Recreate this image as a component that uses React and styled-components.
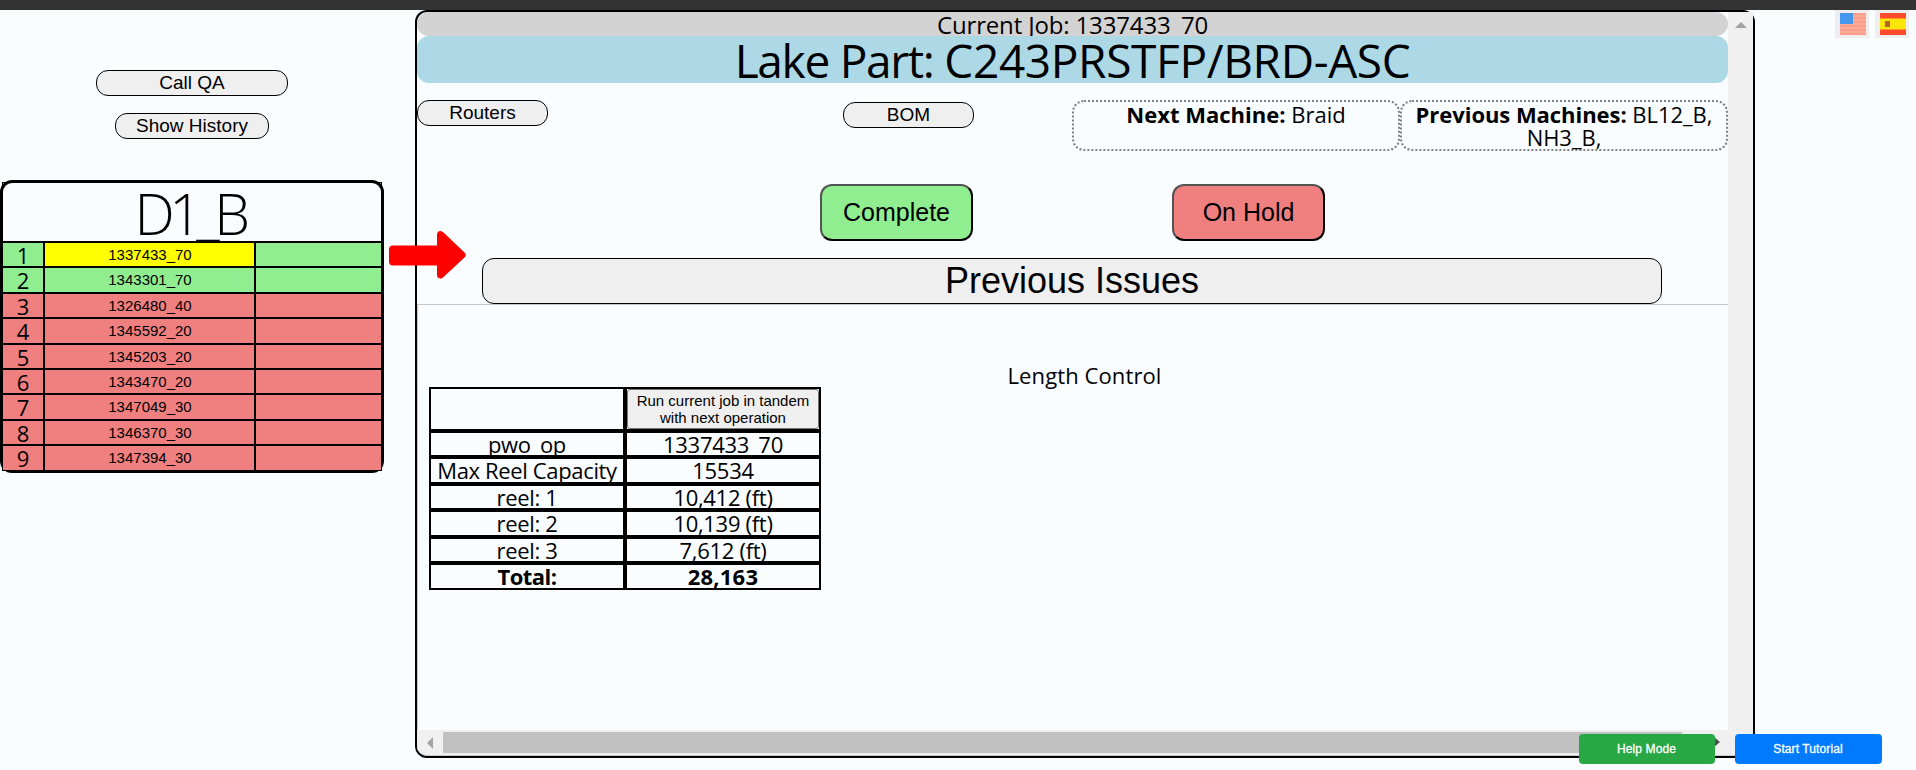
import React from 'react';
import styled, { createGlobalStyle } from 'styled-components';

const GlobalStyle = createGlobalStyle`
  *, *::before, *::after { box-sizing: border-box; }
  html, body, #root { height: 100%; margin: 0; }
  body {
    overflow: hidden;
    background: #f9fdff;
    color: #000;
    font-family: "Segoe UI", "Open Sans", "Noto Sans", sans-serif;
  }
  button { font-family: "Liberation Sans", Arial, sans-serif; color: #000; padding: 0; margin: 0; }
`;

const Page = styled.div`
  position: relative;
  display: flex;
  flex-direction: column;
  width: 1916px;
  height: 770px;
`;
const TopBar = styled.div`flex: 0 0 10px; background: #333;`;
const Body = styled.div`display: flex; flex: 1; min-height: 0; align-items: flex-start;`;
const Sidebar = styled.aside`
  position: relative;
  flex: 0 0 415px;
  display: flex;
  flex-direction: column;
  padding-top: 60px;
`;
const SideActions = styled.div`
  display: flex;
  flex-direction: column;
  align-items: center;
  gap: 17px;
  width: 384px;
  height: 110px;
`;

const PillButton = styled.button`
  width: ${(p) => p.$w}px;
  height: 26px;
  margin-top: ${(p) => p.$drop || 0}px;
  border: 1px solid #000;
  border-radius: 12px;
  background: #efefef;
  font-size: 19px;
  line-height: 22px;
  padding-bottom: 1px;
`;

const QueueFrame = styled.div`
  width: 384px;
  height: 293px;
  border: 3px solid #000;
  border-radius: 12px;
`;
const Queue = styled.div`
  display: grid;
  grid-template-rows: 58px 25px 26px 25px 26px 25px 25px 26px 25px 26px;
  height: 287px;
  outline: 1px solid #000;
`;
const QueueTitle = styled.div`
  position: relative;
  z-index: 1;
  padding-right: 5px;
  text-align: center;
  font-weight: 300;
  font-size: 57px;
  line-height: 61px;
  letter-spacing: -5.500px;
  white-space: nowrap;
`;
const QueueRow = styled.div`
  display: grid;
  grid-template-columns: 40px 209px 125px;
  grid-template-rows: 100%;
  column-gap: 2px;
  min-height: 0;
  border-top: 2px solid #000;
  background: #000;
`;
const QueueCell = styled.div`
  background: ${(p) => p.$bg};
  text-align: center;
`;
const Position = styled(QueueCell)`font-size: 22px; line-height: 25px;`;
const Job = styled(QueueCell)`
  padding-left: 1px;
  font-family: "Liberation Sans", Arial, sans-serif;
  font-size: 15px;
  line-height: 24px;
`;
const Arrow = styled.svg`position: absolute; left: 389px; top: 221px; z-index: 2;`;

const Panel = styled.main`
  flex: 0 0 1340px;
  height: 748px;
  display: grid;
  grid-template-columns: 1311px 25px;
  grid-template-rows: 718px 26px;
  border: 2px solid #000;
  border-radius: 12px;
`;
const Content = styled.div`display: flex; flex-direction: column; min-width: 0;`;
const JobBar = styled.div`
  flex: 0 0 24px;
  border-radius: 12px;
  background: lightgray;
  text-align: center;
  font-size: 24px;
  line-height: 26px;
  overflow: hidden;
`;
const PartBar = styled.div`
  flex: 0 0 47px;
  border-radius: 12px;
  background: lightblue;
  text-align: center;
  font-size: 46px;
  line-height: 48px;
  overflow: hidden;
`;
const Fit = styled.span`letter-spacing: ${(p) => p.$ls || 0}px; white-space: nowrap;`;

const InfoRow = styled.div`
  display: flex;
  align-items: flex-start;
  height: 51px;
  margin-top: 17px;
`;
const InfoSlot = styled.div`flex: 0 0 ${(p) => p.$w}px;`;
const MachineBox = styled.div`
  flex: 0 0 ${(p) => p.$w}px;
  height: 51px;
  padding-top: 1px;
  border: 2px dotted #808080;
  border-radius: 12px;
  text-align: center;
  font-size: 22px;
  line-height: 23px;
`;
const StatusRow = styled.div`
  display: flex;
  gap: 199px;
  margin: 33px 0 17px;
  padding-left: 403px;
`;
const StatusButton = styled.button`
  width: 153px;
  height: 57px;
  border: 2px outset #000;
  border-radius: 12px;
  background: ${(p) => p.$bg};
  font-size: 25px;
`;
const IssuesRow = styled.div`
  display: flex;
  flex: 0 0 46px;
  padding-left: 65px;
`;
const IssuesButton = styled.button`
  width: 1180px;
  border: 1px solid #000;
  border-radius: 12px;
  background: #efefef;
  font-size: 36px;
  line-height: 42px;
`;
const Report = styled.section`
  flex: 1;
  border: solid #c8c8c8;
  border-width: 1px 0 0 1px;
  padding: 57px 0 0 11px;
`;
const ReportTitle = styled.div`
  height: 25px;
  width: 1311px;
  text-align: center;
  font-size: 22px;
  line-height: 26px;
`;
const ReelTable = styled.div`
  display: grid;
  grid-template-columns: 196px 196px;
  grid-template-rows: 44px 26px 27px 26px 27px 26px 27px;
  width: 392px;
`;
const ReelCell = styled.div`
  border: 2px solid #000;
  text-align: center;
  font-size: 22px;
  line-height: 22px;
  font-weight: ${(p) => (p.$bold ? 700 : 400)};
  overflow: hidden;
  white-space: nowrap;
`;
const TandemButton = styled.button`
  display: block;
  width: 192px;
  height: 40px;
  border: 1px solid #767676;
  border-radius: 3px;
  background: #efefef;
  font-size: 15px;
  line-height: 17px;
`;

const VScroll = styled.div`
  background: #f0f0f0;
  padding: 10px 0 0 7px;
  svg { display: block; }
`;
const HScroll = styled.div`
  display: flex;
  align-items: flex-start;
  grid-column: 1 / 3;
  height: 26px;
  padding-top: 2px;
  background: #f0f0f0;
  border-bottom: 1px solid #c8c8c8;
  border-radius: 0 0 0 10px;
`;
const HThumb = styled.div`width: 1239px; height: 21px; background: #c1c1c1;`;
const LeftArrow = styled.svg`margin: 5px 10px 0 10px; flex: none;`;
const RightArrow = styled.svg`margin: 4px 0 0 31px; flex: none;`;

const Languages = styled.div`display: flex; gap: 6px; margin-left: 80px;`;
const FlagButton = styled.div`
  width: 34px;
  height: 28px;
  padding: 3px 3px 3px 5px;
  background: #eeeef1;
  svg { display: block; filter: blur(0.7px); }
`;
const FloatingActions = styled.div`
  position: absolute;
  right: 34px;
  bottom: 6px;
  display: flex;
  gap: 20px;
  z-index: 3;
`;
const FloatButton = styled.button`
  width: ${(p) => p.$w}px;
  height: 30px;
  border: 0;
  border-radius: 4px;
  background: ${(p) => p.$bg};
  color: #fff;
  font-size: 12px;
  letter-spacing: 0.1px;
  padding-right: 1px;
  -webkit-text-stroke: 0.3px #fff;
`;

const jobs = [
  ['1337433_70', 'lightgreen'], ['1343301_70', 'lightgreen'], ['1326480_40', 'lightcoral'],
  ['1345592_20', 'lightcoral'], ['1345203_20', 'lightcoral'], ['1343470_20', 'lightcoral'],
  ['1347049_30', 'lightcoral'], ['1346370_30', 'lightcoral'], ['1347394_30', 'lightcoral'],
];
const reels = [
  ['pwo_op', '1337433_70'], ['Max Reel Capacity', '15534'], ['reel: 1', '10,412 (ft)'],
  ['reel: 2', '10,139 (ft)'], ['reel: 3', '7,612 (ft)'], ['Total:', '28,163'],
];

export default function App() {
  return (
    <Page>
      <GlobalStyle />
      <TopBar />
      <Body>
        <Sidebar>
          <SideActions>
            <PillButton $w={192}>Call QA</PillButton>
            <PillButton $w={154}>Show History</PillButton>
          </SideActions>
          <QueueFrame>
            <Queue>
              <QueueTitle>D1_B</QueueTitle>
              {jobs.map(([job, bg], i) => (
                <QueueRow key={job}>
                  <Position $bg={bg}>{i + 1}</Position>
                  <Job $bg={i === 0 ? 'yellow' : bg}>{job}</Job>
                  <QueueCell $bg={bg} />
                </QueueRow>
              ))}
            </Queue>
          </QueueFrame>
          <Arrow width="77" height="48" viewBox="0 0 77 48">
            <path d="M4 14.5H48V4Q48 0 51.5 0Q53 0 54.5 1.5L75.5 21.5Q78 24 75.5 26.5L54 46.5Q52.5 48 51 47.5Q48 47 48 44V34.5H4Q0 34.5 0 30.500V18.500Q0 14.5 4 14.5Z" fill="#f00" />
          </Arrow>
        </Sidebar>
        <Panel>
          <Content>
            <JobBar><Fit $ls={-0.15}>Current Job: 1337433_70</Fit></JobBar>
            <PartBar><Fit $ls={-1.3}>Lake Part: </Fit><Fit $ls={-0.35}>C243PRSTFP/BRD-ASC</Fit></PartBar>
            <InfoRow>
              <InfoSlot $w={426}><PillButton $w={131}>Routers</PillButton></InfoSlot>
              <InfoSlot $w={229}><PillButton $w={131} $drop={2}>BOM</PillButton></InfoSlot>
              <MachineBox $w={328}><Fit><b>Next Machine:</b> Braid</Fit></MachineBox>
              <MachineBox $w={328}>
                <Fit $ls={-0.05}><b>Previous Machines:</b> BL12_B,<br />NH3_B,</Fit>
              </MachineBox>
            </InfoRow>
            <StatusRow>
              <StatusButton $bg="lightgreen">Complete</StatusButton>
              <StatusButton $bg="lightcoral">On Hold</StatusButton>
            </StatusRow>
            <IssuesRow><IssuesButton>Previous Issues</IssuesButton></IssuesRow>
            <Report>
              <ReportTitle><Fit $ls={0.1}>Length Control</Fit></ReportTitle>
              <ReelTable>
                <ReelCell />
                <ReelCell><TandemButton>Run current job in tandem<br />with next operation</TandemButton></ReelCell>
                {reels.map(([label, value], i) => (
                  <React.Fragment key={label}>
                    <ReelCell $bold={i === 5}><Fit $ls={i === 5 ? -0.55 : -0.35}>{label}</Fit></ReelCell>
                    <ReelCell $bold={i === 5}><Fit $ls={i === 5 ? 0.2 : -0.3}>{value}</Fit></ReelCell>
                  </React.Fragment>
                ))}
              </ReelTable>
            </Report>
          </Content>
          <VScroll>
            <svg width="12" height="6" viewBox="0 0 12 6"><path d="M0 6L6 0L12 6Z" fill="#a3a3a3" /></svg>
          </VScroll>
          <HScroll>
            <LeftArrow width="6" height="12" viewBox="0 0 6 12"><path d="M6 0V12L0 6Z" fill="#a3a3a3" /></LeftArrow>
            <HThumb />
            <RightArrow width="7" height="12" viewBox="0 0 7 12"><path d="M0 0L7 6L0 12Z" fill="#505050" /></RightArrow>
          </HScroll>
        </Panel>
        <Languages>
          <FlagButton>
            <svg width="26" height="22" viewBox="0 0 26 22">
              <rect width="26" height="22" fill="#fbab98" />
              <path d="M0 1H26M0 5H26M0 9H26M0 13H26M0 17H26M0 21H26" stroke="#fa9a85" strokeWidth="1.6" />
              <rect width="13" height="11" fill="#4398ee" />
            </svg>
          </FlagButton>
          <FlagButton>
            <svg width="26" height="22" viewBox="0 0 26 22">
              <rect width="26" height="22" fill="#ff4a2c" />
              <rect y="5.500" width="26" height="11" fill="#ffe60a" />
              <rect x="5" y="8" width="5" height="6" fill="#b8652a" />
            </svg>
          </FlagButton>
        </Languages>
      </Body>
      <FloatingActions>
        <FloatButton $w={136} $bg="#28a745">Help Mode</FloatButton>
        <FloatButton $w={147} $bg="#007bff">Start Tutorial</FloatButton>
      </FloatingActions>
    </Page>
  );
}
